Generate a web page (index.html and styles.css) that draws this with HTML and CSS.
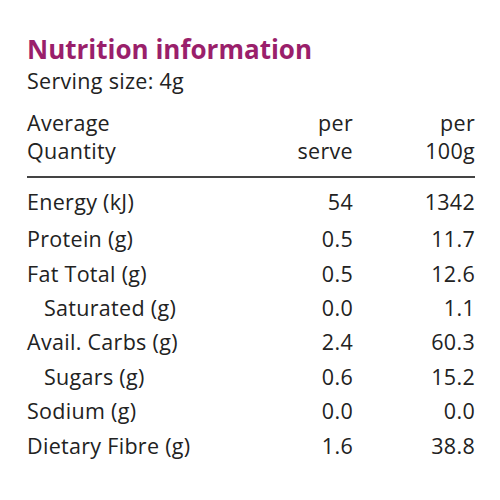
FILE: index.html
```html
<!DOCTYPE html>
<html lang="en">
<head>
  <meta charset="UTF-8" />
  <title>Nutrition information</title>
  <link rel="stylesheet" href="styles.css">
</head>
<body>
  <div class="panel">
    <h1>Nutrition information</h1>
    <p class="serving">Serving size: 4g</p>

    <table class="nutrition">
      <thead>
        <tr>
          <th>Average<br>Quantity</th>
          <th class="num">per<br>serve</th>
          <th class="num">per<br>100g</th>
        </tr>
      </thead>
      <tbody>
        <tr><td>Energy (kJ)</td><td class="num">54</td><td class="num">1342</td></tr>
        <tr><td>Protein (g)</td><td class="num">0.5</td><td class="num">11.7</td></tr>
        <tr><td>Fat Total (g)</td><td class="num">0.5</td><td class="num">12.6</td></tr>
        <tr><td class="sub">Saturated (g)</td><td class="num">0.0</td><td class="num">1.1</td></tr>
        <tr><td>Avail. Carbs (g)</td><td class="num">2.4</td><td class="num">60.3</td></tr>
        <tr><td class="sub">Sugars (g)</td><td class="num">0.6</td><td class="num">15.2</td></tr>
        <tr><td>Sodium (g)</td><td class="num">0.0</td><td class="num">0.0</td></tr>
        <tr><td>Dietary Fibre (g)</td><td class="num">1.6</td><td class="num">38.8</td></tr>
      </tbody>
    </table>
  </div>
</body>
</html>
```

FILE: styles.css
```css
body {
  background-color: #ffffff;
  font-family: "Open Sans", "Noto Sans", sans-serif;
  margin: 0;
  color: #222222;
}

.panel {
  padding: 33px 25px 0 27px;
}

h1 {
  color: #9a1f6b;
  font-size: 26px;
  font-weight: bold;
  line-height: 32px;
  margin: 0;
}

.serving {
  font-size: 21.5px;
  letter-spacing: 0.3px;
  line-height: 26px;
  margin: 3px 0 0 0;
}

.nutrition {
  width: 100%;
  border-collapse: collapse;
  margin-top: 15px;
  font-size: 21.5px;
  letter-spacing: 0.3px;
}

.nutrition th {
  font-weight: normal;
  text-align: left;
  line-height: 28px;
  padding: 0 0 11px 0;
  border-bottom: 2px solid #444444;
}

.nutrition td {
  height: 34.4px;
  line-height: 28px;
  padding: 0;
}

.nutrition tbody tr:first-child td {
  height: 40px;
  padding-top: 4px;
}

.nutrition .num {
  text-align: right;
}

.nutrition th:nth-child(2) {
  width: 120px;
}

.nutrition th:nth-child(3) {
  width: 122px;
}

.nutrition .sub {
  padding-left: 17px;
}
```
